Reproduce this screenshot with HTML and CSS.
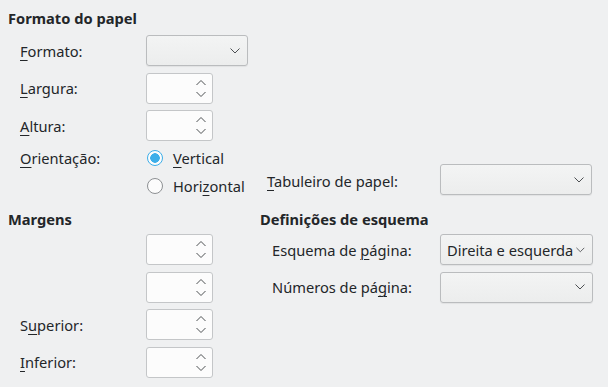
FILE: index.html
```html
<!DOCTYPE html>
<html>
<head>
    <title>Página</title>
    <link rel="stylesheet" href="styles.css">
</head>
<body>

<div class="page">
    <h2 class="heading">Formato do papel</h2>
    <div class="form-grid">
        <label class="field-label"><u>F</u>ormato:</label>
        <div class="combo combo-small">
            <span class="combo-text"></span>
            <svg class="chevron" width="10" height="6" viewBox="0 0 10 6"><polyline points="0.5,0.5 5,5 9.5,0.5"/></svg>
        </div>

        <label class="field-label"><u>L</u>argura:</label>
        <div class="spin">
            <svg class="spin-arrows" width="10" height="17" viewBox="0 0 10 17"><polyline points="0.5,5 5,0.5 9.5,5"/><polyline points="0.5,12 5,16.5 9.5,12"/></svg>
        </div>

        <label class="field-label"><u>A</u>ltura:</label>
        <div class="spin">
            <svg class="spin-arrows" width="10" height="17" viewBox="0 0 10 17"><polyline points="0.5,5 5,0.5 9.5,5"/><polyline points="0.5,12 5,16.5 9.5,12"/></svg>
        </div>
    </div>

    <div class="orient">
        <label class="field-label orient-label"><u>O</u>rientação:</label>
        <div class="orient-grid">
            <label class="radio radio-vertical"><span class="radio-dot checked"></span><span><u>V</u>ertical</span></label>
            <label class="radio radio-horizontal"><span class="radio-dot"></span><span>Hori<u>z</u>ontal</span></label>
            <label class="tray-label"><u>T</u>abuleiro de papel:</label>
            <div class="combo tray-combo">
                <span class="combo-text"></span>
                <svg class="chevron" width="10" height="6" viewBox="0 0 10 6"><polyline points="0.5,0.5 5,5 9.5,0.5"/></svg>
            </div>
        </div>
    </div>

    <div class="lower">
        <div class="margins">
            <h2 class="heading">Margens</h2>
            <div class="form-grid lower-grid">
                <label class="field-label"></label>
                <div class="spin">
                    <svg class="spin-arrows" width="10" height="17" viewBox="0 0 10 17"><polyline points="0.5,5 5,0.5 9.5,5"/><polyline points="0.5,12 5,16.5 9.5,12"/></svg>
                </div>

                <label class="field-label"></label>
                <div class="spin">
                    <svg class="spin-arrows" width="10" height="17" viewBox="0 0 10 17"><polyline points="0.5,5 5,0.5 9.5,5"/><polyline points="0.5,12 5,16.5 9.5,12"/></svg>
                </div>

                <label class="field-label">S<u>u</u>perior:</label>
                <div class="spin">
                    <svg class="spin-arrows" width="10" height="17" viewBox="0 0 10 17"><polyline points="0.5,5 5,0.5 9.5,5"/><polyline points="0.5,12 5,16.5 9.5,12"/></svg>
                </div>

                <label class="field-label"><u>I</u>nferior:</label>
                <div class="spin">
                    <svg class="spin-arrows" width="10" height="17" viewBox="0 0 10 17"><polyline points="0.5,5 5,0.5 9.5,5"/><polyline points="0.5,12 5,16.5 9.5,12"/></svg>
                </div>
            </div>
        </div>

        <div class="layout">
            <h2 class="heading">Definições de esquema</h2>
            <div class="form-grid lower-grid layout-grid">
                <label class="field-label">Esquema de <u>p</u>ágina:</label>
                <div class="combo combo-wide">
                    <span class="combo-text">Direita e esquerda</span>
                    <svg class="chevron" width="10" height="6" viewBox="0 0 10 6"><polyline points="0.5,0.5 5,5 9.5,0.5"/></svg>
                </div>

                <label class="field-label">Números de pá<u>g</u>ina:</label>
                <div class="combo combo-wide">
                    <span class="combo-text"></span>
                    <svg class="chevron" width="10" height="6" viewBox="0 0 10 6"><polyline points="0.5,0.5 5,5 9.5,0.5"/></svg>
                </div>
            </div>
        </div>
    </div>
</div>

</body>
</html>
```

FILE: styles.css
```css
html, body {
    margin: 0;
    background-color: #eff0f1;
}
body {
    font-family: "Noto Sans", sans-serif;
    font-size: 14.67px;
    color: #232629;
}
u {
    text-decoration: underline;
    text-underline-offset: 3px;
    text-decoration-thickness: 1px;
}
svg polyline {
    fill: none;
    stroke: #4d5053;
    stroke-width: 1;
}
.page {
    width: 592px;
    padding: 9px 8px 0 8px;
}
.heading {
    margin: 0;
    font-size: 14.67px;
    font-weight: bold;
    line-height: 19px;
}
.form-grid {
    display: grid;
    grid-template-columns: 126px auto;
    grid-auto-rows: 31px;
    row-gap: 6.5px;
    padding-left: 12px;
    margin-top: 7px;
    align-items: center;
}
.lower-grid {
    margin-top: 5px;
}
.field-label {
    line-height: 20px;
    white-space: nowrap;
}
.combo {
    height: 29px;
    border: 1px solid #babcbe;
    border-radius: 3px;
    background: linear-gradient(#f3f4f4, #eceded);
    box-shadow: 0 1px 1px rgba(0, 0, 0, 0.06);
    display: flex;
    align-items: center;
    padding: 0 7px 0 6px;
    box-sizing: content-box;
}
.combo-small {
    width: 87px;
}
.combo-wide {
    width: 138px;
}
.tray-combo {
    width: 137px;
}
.combo-text {
    flex: 1;
    white-space: nowrap;
}
.chevron {
    display: block;
    margin-left: 3px;
}
.spin {
    width: 65px;
    height: 29px;
    border: 1px solid #c4c6c8;
    border-radius: 3px;
    background-color: #fcfcfc;
    display: flex;
    justify-content: flex-end;
    align-items: center;
}
.spin-arrows {
    display: block;
    margin-right: 6px;
}
.orient {
    display: flex;
    padding-left: 12px;
    margin-top: 6px;
}
.orient-label {
    width: 126px;
    margin-top: 1px;
}
.orient-grid {
    display: grid;
    grid-template-columns: 121px 173px auto;
    grid-template-rows: 20px 20px;
    row-gap: 8px;
    margin-top: 1px;
}
.radio {
    display: flex;
    align-items: center;
    gap: 10px;
    line-height: 20px;
    white-space: nowrap;
}
.radio-vertical {
    grid-row: 1;
    grid-column: 1;
}
.radio-horizontal {
    grid-row: 2;
    grid-column: 1;
}
.radio-dot {
    width: 14px;
    height: 14px;
    border: 1px solid #8d9093;
    border-radius: 50%;
    background-color: #fcfcfc;
    margin-left: 1px;
    flex: none;
}
.radio-dot.checked {
    border-color: #3daee9;
    background: radial-gradient(circle, #3daee9 0 4.5px, #fcfcfc 5px);
}
.tray-label {
    grid-row: 1 / span 2;
    grid-column: 2;
    align-self: end;
    line-height: 20px;
    margin-bottom: 5px;
    white-space: nowrap;
}
.tray-combo {
    grid-row: 1 / span 2;
    grid-column: 3;
    align-self: end;
    margin-bottom: 1px;
}
.lower {
    display: flex;
    margin-top: 14px;
}
.margins {
    width: 252px;
}
.layout {
    flex: 1;
}
.layout-grid {
    grid-template-columns: 168px auto;
}
```
